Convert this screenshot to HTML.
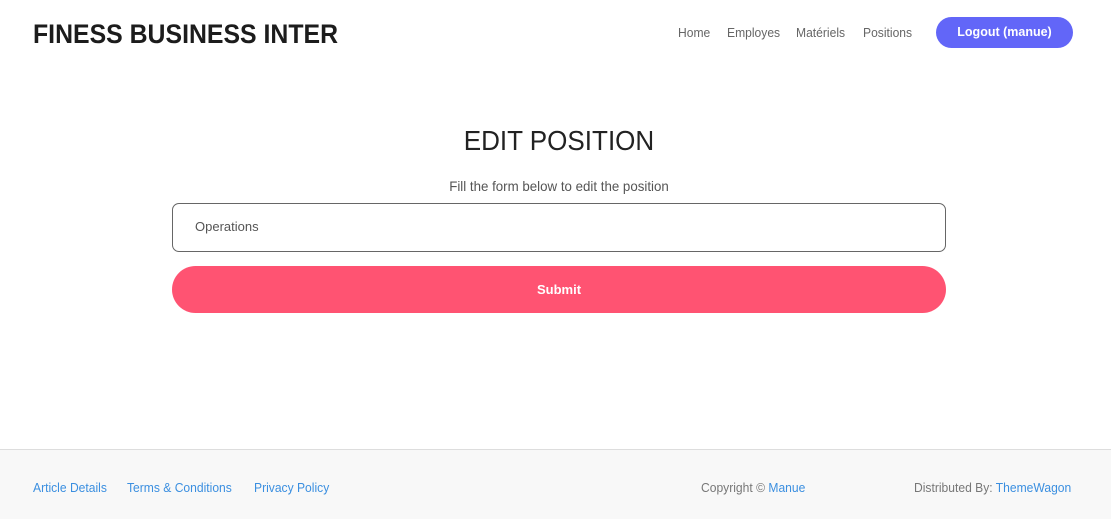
<!DOCTYPE html>
<html><head><meta charset="utf-8"><style>
*{margin:0;padding:0;box-sizing:border-box}
body{width:1111px;height:519px;background:#fff;font-family:"Liberation Sans",sans-serif;position:relative;overflow:hidden}
.brand{position:absolute;left:33px;top:19px;font-size:27px;font-weight:bold;color:#1c1c1c;transform:scaleX(0.92);transform-origin:left;white-space:nowrap}
.nav{position:absolute;top:25px;font-size:13px;color:#666;white-space:nowrap;transform:scaleX(0.93);transform-origin:left}
.btn{position:absolute;left:936px;top:17px;width:137px;height:31px;border-radius:16px;background:#6266f8;color:#fff;font-size:12.5px;font-weight:bold;text-align:center;line-height:31px}
h1{position:absolute;left:0;width:1118px;top:125px;text-align:center;font-weight:normal;font-size:28px;color:#222;transform:scaleX(0.93)}
.sub{position:absolute;left:0;width:1118px;top:178px;text-align:center;font-size:14px;color:#555;transform:scaleX(0.95)}
.inp{position:absolute;left:172px;top:203px;width:774px;height:49px;border:1px solid #666;border-radius:7px;font-size:13px;color:#555;padding:15px 0 0 22px}
.sub2{position:absolute;left:172px;top:266px;width:774px;height:47px;border-radius:24px;background:#ff5372;color:#fff;font-weight:bold;font-size:13px;text-align:center;line-height:47px}
.foot{position:absolute;left:0;top:449px;width:1111px;height:70px;background:#f8f8f8;border-top:1px solid #ddd}
.f{position:absolute;top:30px;font-size:13px;color:#3b8fe0;white-space:nowrap;transform:scaleX(0.93);transform-origin:left}
.g{color:#777}
</style></head><body>
<div class="brand">FINESS BUSINESS INTER</div>
<div class="nav" style="left:678px">Home</div>
<div class="nav" style="left:727px">Employes</div>
<div class="nav" style="left:796px">Matériels</div>
<div class="nav" style="left:863px">Positions</div>
<div class="btn">Logout (manue)</div>
<h1>EDIT POSITION</h1>
<div class="sub">Fill the form below to edit the position</div>
<div class="inp">Operations</div>
<div class="sub2">Submit</div>
<div class="foot">
<div class="f" style="left:33px">Article Details</div>
<div class="f" style="left:127px">Terms &amp; Conditions</div>
<div class="f" style="left:254px">Privacy Policy</div>
<div class="f" style="left:701px"><span class="g">Copyright ©</span> Manue</div>
<div class="f" style="left:914px"><span class="g">Distributed By:</span> ThemeWagon</div>
</div>
</body></html>
